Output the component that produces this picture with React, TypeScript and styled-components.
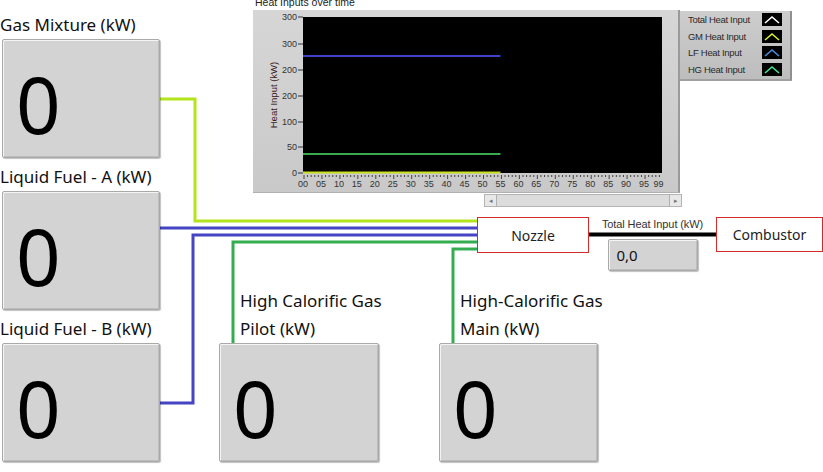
import styled, { createGlobalStyle } from "styled-components";

const GlobalStyle = createGlobalStyle`
  html, body { margin: 0; padding: 0; background: #ffffff; }
  body { font-family: "Noto Sans", "Open Sans", sans-serif; overflow: hidden; }
`;

const Canvas = styled.div`
  position: relative;
  width: 823px;
  height: 472px;
  overflow: hidden;
  background: #ffffff;
`;

const Wires = styled.svg`
  position: absolute;
  left: 0;
  top: 0;
  pointer-events: none;
`;

// nodes of the front panel sit on a free canvas
const Node = styled.div<{ $x: number; $y: number }>`
  position: absolute;
  left: ${(p) => p.$x}px;
  top: ${(p) => p.$y}px;
`;

const Column = styled.div<{ $gap: number }>`
  display: flex;
  flex-direction: column;
  gap: ${(p) => p.$gap}px;
`;

const Row = styled.div<{ $gap: number }>`
  display: flex;
  align-items: flex-start;
  gap: ${(p) => p.$gap}px;
`;

const Control = styled.div<{ $indent: number; $w: number }>`
  display: flex;
  flex-direction: column;
  width: ${(p) => p.$w}px;
  padding-left: ${(p) => p.$indent}px;
`;

const ControlLabel = styled.div<{ $shift: number }>`
  font-size: 17px;
  line-height: 28px;
  color: #111;
  white-space: nowrap;
  margin-left: ${(p) => p.$shift}px;
  &:last-of-type {
    margin-bottom: 1px;
  }
`;

const Display = styled.div`
  width: 100%;
  height: 119px;
  box-sizing: border-box;
  background: #d3d3d3;
  border: 1px solid #a9a9a9;
  border-radius: 2px;
  box-shadow: inset 1px 1px 0 #f4f4f4, inset -1px -1px 0 #bdbdbd, 1px 1px 1px rgba(0, 0, 0, 0.25);
  display: flex;
  align-items: center;
  padding: 10px 0 0 13px;
  font-size: 78px;
  line-height: 1;
  color: #000;
`;

const GraphTitle = styled.div`
  font-family: "Liberation Sans", Arial, sans-serif;
  font-size: 10.5px;
  color: #222;
  line-height: 16px;
`;

const GraphColumn = styled.div`
  display: flex;
  flex-direction: column;
  align-items: flex-start;
  padding-left: 2px;
`;

const GraphFrame = styled.div`
  width: 427px;
  height: 183px;
  margin-left: -2px;
  box-sizing: border-box;
  background: linear-gradient(#d6d6d6, #c9c9c9);
  border-right: 2px solid #9a9a9a;
  border-bottom: 1px solid #b0b0b0;
`;

const Legend = styled.div`
  width: 112px;
  margin-top: 17px;
  box-sizing: border-box;
  padding: 2px 8px 3px 8px;
  background: linear-gradient(#cdcdcd, #bdbdbd);
  border-right: 2px solid #909090;
  border-bottom: 2px solid #a0a0a0;
  display: flex;
  flex-direction: column;
  gap: 3.5px;
`;

const LegendRow = styled.div`
  display: flex;
  align-items: center;
  justify-content: space-between;
  font-family: "Liberation Sans", Arial, sans-serif;
  font-size: 9.5px;
  letter-spacing: -0.3px;
  color: #2a2a2a;
  height: 13px;
`;

const Swatch = styled.svg`
  background: #000;
  display: block;
`;

const Scrollbar = styled.div`
  align-self: flex-end;
  margin-top: 1px;
  margin-right: -2px;
  width: 198px;
  height: 13px;
  box-sizing: border-box;
  background: #dcdcdc;
  border: 1px solid #b4b4b4;
  display: flex;
  justify-content: space-between;
  align-items: stretch;
`;

const ScrollButton = styled.div`
  width: 11px;
  background: #e8e8e8;
  border-right: 1px solid #b0b0b0;
  font-size: 7px;
  color: #777;
  display: flex;
  align-items: center;
  justify-content: center;
  &:last-child {
    border-right: none;
    border-left: 1px solid #b0b0b0;
  }
`;

const Block = styled.div<{ $w: number; $h: number }>`
  width: ${(p) => p.$w}px;
  height: ${(p) => p.$h}px;
  box-sizing: border-box;
  border: 1.5px solid #d42a2a;
  background: #fff;
  display: flex;
  align-items: center;
  justify-content: center;
  font-size: 14px;
  color: #222;
`;

const Readout = styled.div`
  width: 127px;
  padding-top: 1px;
  display: flex;
  flex-direction: column;
  align-items: center;
  gap: 9px;
`;

const SmallLabel = styled.div`
  font-family: "Liberation Sans", Arial, sans-serif;
  font-size: 11px;
  line-height: 12px;
  letter-spacing: -0.1px;
  color: #333;
`;

const Indicator = styled.div`
  width: 90px;
  height: 32px;
  box-sizing: border-box;
  background: #d3d3d3;
  border: 1px solid #a9a9a9;
  border-radius: 2px;
  box-shadow: inset 1px 1px 0 #f4f4f4, inset -1px -1px 0 #bdbdbd, 1px 1px 1px rgba(0, 0, 0, 0.25);
  display: flex;
  align-items: center;
  padding-left: 8px;
  font-size: 15px;
  color: #111;
`;

const yTicks = [
  { label: "300", y: 7 },
  { label: "300", y: 34 },
  { label: "200", y: 60 },
  { label: "200", y: 86 },
  { label: "100", y: 112 },
  { label: "50", y: 137 },
  { label: "0", y: 163 },
];

const xLabels = ["00", "05", "10", "15", "20", "25", "30", "35", "40", "45", "50", "55", "60", "65", "70", "75", "80", "85", "90", "95", "99"];

const legendItems = [
  { name: "Total Heat Input", color: "#ffffff" },
  { name: "GM Heat Input", color: "#d8f020" },
  { name: "LF Heat Input", color: "#4a8cdc" },
  { name: "HG Heat Input", color: "#40e890" },
];

const Chart = () => {
  const px = 50;
  const pr = 409;
  const unit = (pr - px) / 100;
  return (
    <svg width={427} height={183} style={{ display: "block" }}>
      <rect x={px} y={7} width={pr - px} height={156} fill="#000" />
      {yTicks.map((t, i) => (
        <g key={i}>
          <line x1={45} x2={50} y1={t.y} y2={t.y} stroke="#333" strokeWidth={1} />
          <text x={44} y={t.y + 3} fontSize={9} textAnchor="end" fill="#333" fontFamily="Liberation Sans, Arial, sans-serif">
            {t.label}
          </text>
        </g>
      ))}
      <text
        transform="translate(24 85) rotate(-90)"
        fontSize={9.5}
        textAnchor="middle"
        fill="#3a1a1a"
        fontFamily="Liberation Sans, Arial, sans-serif"
      >
        Heat Input (kW)
      </text>
      {Array.from({ length: 100 }).map((_, i) => (
        <line
          key={i}
          x1={px + i * unit + 1}
          x2={px + i * unit + 1}
          y1={165}
          y2={i % 5 === 0 ? 169 : 167}
          stroke="#444"
          strokeWidth={1}
        />
      ))}
      {xLabels.map((l, i) => (
        <text
          key={l}
          x={px + (l === "99" ? 99 : i * 5) * unit}
          y={177}
          fontSize={9}
          textAnchor="middle"
          fill="#333"
          fontFamily="Liberation Sans, Arial, sans-serif"
        >
          {l}
        </text>
      ))}
      <line x1={px} x2={px + 55 * unit} y1={46} y2={46} stroke="#4040c8" strokeWidth={2} />
      <line x1={px} x2={px + 55 * unit} y1={144} y2={144} stroke="#3caa50" strokeWidth={2} />
      <line x1={px} x2={px + 55 * unit} y1={162.5} y2={162.5} stroke="#c8e020" strokeWidth={2} />
    </svg>
  );
};

type ControlDef = { label: string[]; w: number };

const leftControls: ControlDef[] = [
  { label: ["Gas Mixture (kW)"], w: 158 },
  { label: ["Liquid Fuel - A (kW)"], w: 158 },
  { label: ["Liquid Fuel - B (kW)"], w: 158 },
];

const bottomControls: ControlDef[] = [
  { label: ["High Calorific Gas", "Pilot (kW)"], w: 160 },
  { label: ["High-Calorific Gas", "Main (kW)"], w: 159 },
];

const NumericControl = ({ def, indent, shift }: { def: ControlDef; indent: number; shift: number }) => (
  <Control $indent={indent} $w={def.w}>
    {def.label.map((l) => (
      <ControlLabel key={l} $shift={shift}>
        {l}
      </ControlLabel>
    ))}
    <Display>0</Display>
  </Control>
);

const App = () => {
  return (
    <>
      <GlobalStyle />
      <Canvas>
        <Wires width={823} height={472}>
          <g fill="none" strokeWidth={3} strokeLinejoin="miter">
            <path d="M159 99 H195 V221 H478" stroke="#b4e41c" />
            <path d="M159 228 H478" stroke="#4444c4" />
            <path d="M159 403 H193 V235 H478" stroke="#4444c4" />
            <path d="M233 345 V242 H478" stroke="#34ac50" />
            <path d="M453 345 V249 H478" stroke="#34ac50" />
            <path d="M588 234.5 H717" stroke="#000" strokeWidth={4} />
          </g>
        </Wires>

        <Node $x={0} $y={11}>
          <Column $gap={5}>
            {leftControls.map((c) => (
              <NumericControl key={c.label[0]} def={c} indent={2} shift={-2} />
            ))}
          </Column>
        </Node>

        <Node $x={219} $y={287}>
          <Row $gap={60}>
            {bottomControls.map((c) => (
              <NumericControl key={c.label[0]} def={c} indent={0} shift={21} />
            ))}
          </Row>
        </Node>

        <Node $x={253} $y={-6}>
          <Row $gap={0}>
            <GraphColumn>
              <GraphTitle>Heat Inputs over time</GraphTitle>
              <GraphFrame>
                <Chart />
              </GraphFrame>
              <Scrollbar>
                <ScrollButton>◂</ScrollButton>
                <ScrollButton>▸</ScrollButton>
              </Scrollbar>
            </GraphColumn>
            <Legend>
              {legendItems.map((it) => (
                <LegendRow key={it.name}>
                  <span>{it.name}</span>
                  <Swatch width={20} height={13}>
                    <polyline points="3,10 10,4 17,10" fill="none" stroke={it.color} strokeWidth={1.6} />
                  </Swatch>
                </LegendRow>
              ))}
            </Legend>
          </Row>
        </Node>

        <Node $x={477} $y={217}>
          <Row $gap={0}>
            <Block $w={112} $h={36}>Nozzle</Block>
            <Readout>
              <SmallLabel>Total Heat Input (kW)</SmallLabel>
              <Indicator>0,0</Indicator>
            </Readout>
            <Block $w={107} $h={35}>Combustor</Block>
          </Row>
        </Node>
      </Canvas>
    </>
  );
};

export default App;
